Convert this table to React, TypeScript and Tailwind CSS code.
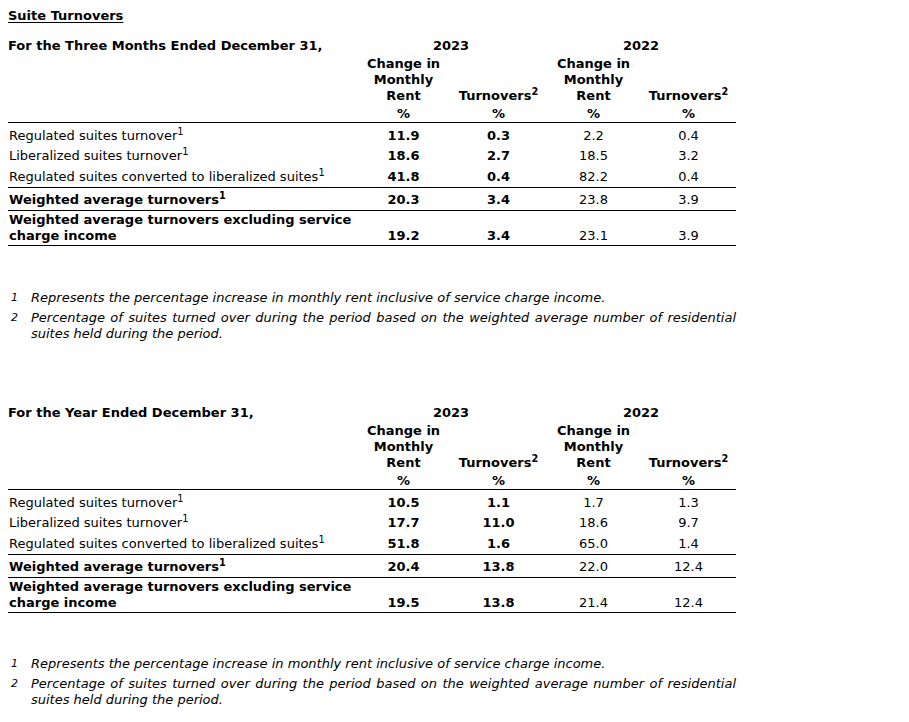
import React from "react";

type Row = {
  label: string;
  vals: string[];
  bold?: boolean;
  wrap?: boolean;
  rowClass: string;
};

const threeMonthRows: Row[] = [
  { label: "Regulated suites turnover", vals: ["11.9", "0.3", "2.2", "0.4"], rowClass: "pt-[5px] pb-[1px]" },
  { label: "Liberalized suites turnover", vals: ["18.6", "2.7", "18.5", "3.2"], rowClass: "pt-[3px] pb-[2px]" },
  { label: "Regulated suites converted to liberalized suites", vals: ["41.8", "0.4", "82.2", "0.4"], rowClass: "pt-[3px] pb-[2px] border-b border-black" },
  { label: "Weighted average turnovers", bold: true, vals: ["20.3", "3.4", "23.8", "3.9"], rowClass: "pt-[4px] pb-[2px] border-b border-black" },
  { label: "Weighted average turnovers excluding service charge income", bold: true, wrap: true, vals: ["19.2", "3.4", "23.1", "3.9"], rowClass: "py-[1px] border-b border-black" },
];

const yearRows: Row[] = [
  { label: "Regulated suites turnover", vals: ["10.5", "1.1", "1.7", "1.3"], rowClass: "pt-[5px] pb-[1px]" },
  { label: "Liberalized suites turnover", vals: ["17.7", "11.0", "18.6", "9.7"], rowClass: "pt-[3px] pb-[2px]" },
  { label: "Regulated suites converted to liberalized suites", vals: ["51.8", "1.6", "65.0", "1.4"], rowClass: "pt-[3px] pb-[2px] border-b border-black" },
  { label: "Weighted average turnovers", bold: true, vals: ["20.4", "13.8", "22.0", "12.4"], rowClass: "pt-[4px] pb-[2px] border-b border-black" },
  { label: "Weighted average turnovers excluding service charge income", bold: true, wrap: true, vals: ["19.5", "13.8", "21.4", "12.4"], rowClass: "py-[1px] border-b border-black" },
];

const ChangeHead = () => (
  <div className="w-[95px] text-center">
    Change in
    <br />
    Monthly
    <br />
    Rent
  </div>
);

const TurnHead = () => (
  <div className="w-[95px] text-center">
    Turnovers<sup>2</sup>
  </div>
);

const TurnoverTable = ({ heading, rows }: { heading: string; rows: Row[] }) => (
  <div className="w-[728px]">
    <div className="flex font-bold">
      <div className="w-[348px]">{heading}</div>
      <div className="w-[190px] text-center">2023</div>
      <div className="w-[190px] text-center">2022</div>
    </div>
    <div className="flex items-end font-bold mt-[2px]">
      <div className="w-[348px]" />
      <ChangeHead />
      <TurnHead />
      <ChangeHead />
      <TurnHead />
    </div>
    <div className="flex font-bold mt-[2px] border-b border-black">
      <div className="w-[348px]" />
      <div className="w-[95px] text-center">%</div>
      <div className="w-[95px] text-center">%</div>
      <div className="w-[95px] text-center">%</div>
      <div className="w-[95px] text-center">%</div>
    </div>
    {rows.map((r) => (
      <div key={r.label} className={`flex items-end ${r.rowClass}`}>
        <div className={`w-[348px] pl-[1px] ${r.bold ? "font-bold" : ""}`}>
          {r.wrap ? (
            <>
              Weighted average turnovers excluding service
              <br />
              charge income
            </>
          ) : (
            <>
              {r.label}
              <sup>1</sup>
            </>
          )}
        </div>
        {r.vals.map((v, i) => (
          <div key={i} className={`w-[95px] text-center ${i < 2 ? "font-bold" : ""}`}>
            {v}
          </div>
        ))}
      </div>
    ))}
  </div>
);

const Footnotes = () => (
  <div className="w-[728px] italic">
    <div className="flex">
      <div className="w-[23px] pl-[3px] text-[11px]">1</div>
      <div className="flex-1">Represents the percentage increase in monthly rent inclusive of service charge income.</div>
    </div>
    <div className="flex mt-1">
      <div className="w-[23px] pl-[3px] text-[11px]">2</div>
      <div className="flex-1">
        <div className="text-justify [text-align-last:justify] whitespace-nowrap">
          Percentage of suites turned over during the period based on the weighted average number of residential
        </div>
        <div>suites held during the period.</div>
      </div>
    </div>
  </div>
);

export default function App() {
  return (
    <div className="min-h-screen bg-white text-black pl-2 pt-[8px] text-[13px] leading-4 [font-family:'DejaVu_Sans',Verdana,sans-serif]">
      <div className="font-bold underline underline-offset-2">Suite Turnovers</div>
      <div className="mt-[14px]">
        <TurnoverTable heading="For the Three Months Ended December 31," rows={threeMonthRows} />
      </div>
      <div className="mt-[44px]">
        <Footnotes />
      </div>
      <div className="mt-[63px]">
        <TurnoverTable heading="For the Year Ended December 31," rows={yearRows} />
      </div>
      <div className="mt-[43px]">
        <Footnotes />
      </div>
    </div>
  );
}
